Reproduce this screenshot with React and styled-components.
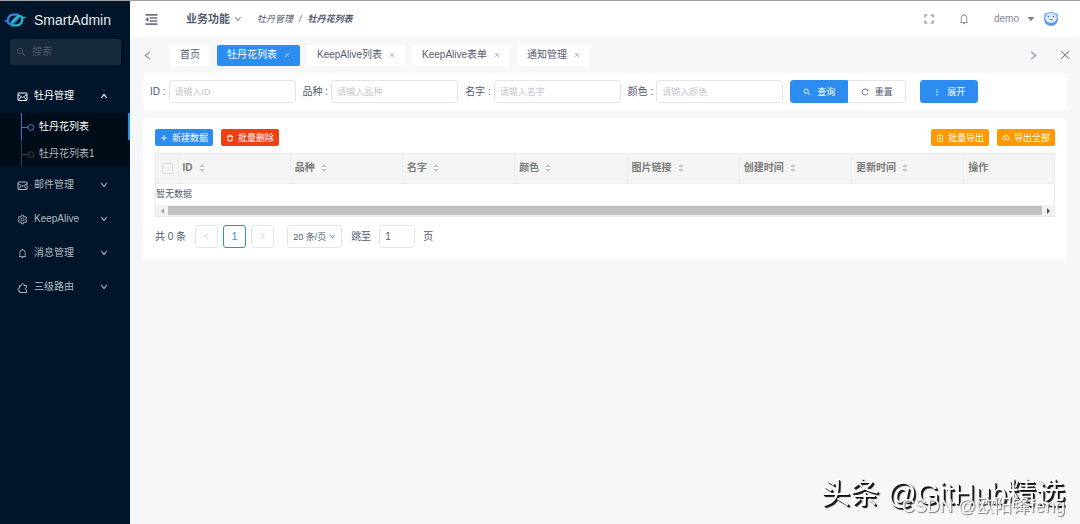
import styled, { createGlobalStyle, css } from 'styled-components';
import {
    AiOutlineMenuFold,
    AiOutlineDown,
    AiOutlineUp,
    AiOutlineLeft,
    AiOutlineRight,
    AiOutlineClose,
    AiOutlineSearch,
    AiOutlineSetting,
    AiOutlineBell,
    AiOutlineReload,
    AiOutlinePlus,
    AiOutlineDelete,
    AiOutlineCloudDownload,
    AiFillCaretDown,
} from 'react-icons/ai';

const menus = [
    {
        name: '牡丹管理',
        icon: <MailIcon />,
        open: true,
        children: [
            { name: '牡丹花列表', active: true },
            { name: '牡丹花列表1' },
        ],
    },
    { name: '邮件管理', icon: <MailIcon /> },
    { name: 'KeepAlive', icon: <AiOutlineSetting /> },
    { name: '消息管理', icon: <AiOutlineBell /> },
    { name: '三级路由', icon: <PuzzleIcon /> },
];

const tabs = [
    { name: '首页', fixed: true },
    { name: '牡丹花列表', active: true },
    { name: 'KeepAlive列表' },
    { name: 'KeepAlive表单' },
    { name: '通知管理' },
];

const fields = [
    { id: 'id', name: 'ID' },
    { id: 'breed', name: '品种' },
    { id: 'name', name: '名字' },
    { id: 'color', name: '颜色' },
];

const columns = ['ID', '品种', '名字', '颜色', '图片链接', '创建时间', '更新时间'];

function Logo() {
    return (
        <svg width="22" height="14" viewBox="0 0 22 14" fill="none" strokeWidth="2.4" strokeLinecap="round" aria-hidden="true">
            <path d="M14 1.600H9.500C3.500 1.600 1.500 11 6.500 11C9 11 11.500 7.500 14 4.800" stroke="#2f83e8" />
            <path d="M1 8H3" stroke="#2f83e8" strokeWidth="1.500" />
            <path d="M8 12.400H12.500C18.500 12.400 20.500 3 15.500 3C13 3 10.500 6.500 8 9.200" stroke="#22b5c8" />
            <path d="M19 4.500H21" stroke="#22b5c8" strokeWidth="1.500" />
        </svg>
    );
}

function Avatar() {
    return (
        <svg width="16" height="16" viewBox="0 0 16 16" aria-hidden="true">
            <circle cx="2.500" cy="4" r="2" fill="#a9cdf5" />
            <circle cx="13.500" cy="4" r="2" fill="#a9cdf5" />
            <circle cx="8" cy="8" r="7" fill="#5a9be6" />
            <ellipse cx="8" cy="7" rx="5.800" ry="5" fill="#dcecfc" />
            <circle cx="5.500" cy="5.500" r="0.800" fill="#3d6ea8" />
            <circle cx="10.500" cy="5.500" r="0.800" fill="#3d6ea8" />
            <path d="M6.500 8.500H9.500" stroke="#3d6ea8" strokeWidth="0.800" />
        </svg>
    );
}

function MailIcon() {
    return (
        <svg viewBox="0 0 11 11" fill="none" stroke="currentColor" aria-hidden="true">
            <rect x="1" y="2" width="9" height="7.500" rx="0.500" />
            <path d="M1 3.500L5.500 6.500L10 3.500M1.500 9L4 6M9.500 9L7 6" strokeWidth="0.900" />
        </svg>
    );
}

function PuzzleIcon() {
    return (
        <svg viewBox="0 0 11 11" fill="none" stroke="currentColor" aria-hidden="true">
            <path d="M2.500 3.500H4.500C4 1 7.500 1 7 3.500H9.500V5.500C8 5.500 8 8 9.500 8V10.500H2.500V8.500C0.200 9 0.200 5.800 2.500 6.200Z" />
        </svg>
    );
}

function FullscreenIcon() {
    return (
        <svg width="10" height="10" viewBox="0 0 10 10" fill="none" stroke="currentColor" strokeWidth="1.200" aria-hidden="true">
            <path d="M1 3.500V1H3.500M6.500 1H9V3.500M9 6.500V9H6.500M3.500 9H1V6.500" />
        </svg>
    );
}

function MoreIcon() {
    return (
        <svg viewBox="0 0 8 8" fill="currentColor" aria-hidden="true">
            <path d="M3.500 1H4.700V2.200H3.500ZM3.500 3.500H4.700V4.700H3.500ZM3.500 6H4.700V7.200H3.500Z" />
        </svg>
    );
}

function ExportIcon() {
    return (
        <svg viewBox="0 0 8 8" fill="none" stroke="currentColor" strokeWidth="0.800" aria-hidden="true">
            <path d="M2.500 1.500H1.500V7.500H6.500V1.500H5.500M2.800 1H5.200M4 2.500V5.800M2.800 4.600L4 5.800L5.200 4.600" />
        </svg>
    );
}

function SortIcon() {
    return (
        <svg width="6" height="8" viewBox="0 0 6 8" fill="#c5c8ce" aria-hidden="true">
            <path d="M3 0L6 3H0Z" />
            <path d="M3 8L0 5H6Z" />
        </svg>
    );
}

function Sidebar() {
    return (
        <Side>
            <Brand href="#home"><Logo />SmartAdmin</Brand>
            <MenuSearch>
                <AiOutlineSearch />
                <input type="text" placeholder="搜索" aria-label="搜索" />
            </MenuSearch>
            <nav>
                {menus.map((menu) => (
                    <div key={menu.name}>
                        <MenuItem type="button" $open={menu.open} aria-expanded={!!menu.open}>
                            {menu.icon}
                            <span>{menu.name}</span>
                            {menu.open ? <AiOutlineUp className="arrow" /> : <AiOutlineDown className="arrow" />}
                        </MenuItem>
                        {menu.children && (
                            <SubMenu>
                                {menu.children.map((child) => (
                                    <SubItem key={child.name} href="#peony" $active={child.active}>
                                        <Branch viewBox="0 0 14 27" $active={child.active} aria-hidden="true">
                                            <path d="M0.500 0V27M0.500 14.500H7" />
                                            <circle cx="10" cy="14.500" r="2.800" />
                                        </Branch>
                                        {child.name}
                                    </SubItem>
                                ))}
                            </SubMenu>
                        )}
                    </div>
                ))}
            </nav>
        </Side>
    );
}

function Header() {
    return (
        <Top>
            <IconButton type="button" aria-label="收起菜单" $size={15} $color="#515a6e" $bold><AiOutlineMenuFold /></IconButton>
            <SystemButton type="button">业务功能 <AiOutlineDown /></SystemButton>
            <Crumbs>
                <a href="#peony">牡丹管理</a>
                <span>/</span>
                <b>牡丹花列表</b>
            </Crumbs>
            <Tools>
                <IconButton type="button" aria-label="全屏"><FullscreenIcon /></IconButton>
                <IconButton type="button" aria-label="通知" $size={12}><AiOutlineBell /></IconButton>
                <UserButton type="button">demo <AiFillCaretDown /><Avatar /></UserButton>
            </Tools>
        </Top>
    );
}

function TabBar() {
    return (
        <Tabs>
            <IconButton type="button" aria-label="向左" $size={11} $bold><AiOutlineLeft /></IconButton>
            <TabList>
                {tabs.map((tab) => (
                    <Tab key={tab.name} type="button" $active={tab.active}>
                        {tab.name}
                        {!tab.fixed && <AiOutlineClose />}
                    </Tab>
                ))}
            </TabList>
            <TabActions>
                <IconButton type="button" aria-label="向右" $size={11} $bold><AiOutlineRight /></IconButton>
                <IconButton type="button" aria-label="关闭" $size={12}><AiOutlineClose /></IconButton>
            </TabActions>
        </Tabs>
    );
}

function SearchForm() {
    return (
        <Search onSubmit={(e) => e.preventDefault()}>
            {fields.map((field) => (
                <Field key={field.id}>
                    <label htmlFor={field.id}>{field.name} :</label>
                    <TextInput id={field.id} type="text" placeholder={`请输入${field.name}`} />
                </Field>
            ))}
            <ButtonGroup>
                <Button type="submit" $color="#2d8cf0"><AiOutlineSearch />查询</Button>
                <Button type="reset"><AiOutlineReload />重置</Button>
            </ButtonGroup>
            <Button type="button" $color="#2d8cf0"><MoreIcon />展开</Button>
        </Search>
    );
}

function DataTable() {
    return (
        <TableBox>
            <Table>
                <colgroup>
                    <col className="check" />
                    {columns.map((column) => <col key={column} className="data" />)}
                    <col />
                </colgroup>
                <thead>
                    <tr>
                        <th><Checkbox type="checkbox" aria-label="全选" disabled /></th>
                        {columns.map((column) => (
                            <th key={column}><HeadCell>{column}<SortIcon /></HeadCell></th>
                        ))}
                        <th>操作</th>
                    </tr>
                </thead>
                <tbody>
                    <tr><td colSpan={9}>暂无数据</td></tr>
                </tbody>
            </Table>
            <ScrollBar>
                <ScrollArrow viewBox="0 0 12 12" $color="#a3a3a3" aria-hidden="true"><path d="M8 3V9L5 6Z" /></ScrollArrow>
                <ScrollThumb />
                <ScrollArrow viewBox="0 0 12 12" $color="#505050" aria-hidden="true"><path d="M5 3V9L8 6Z" /></ScrollArrow>
            </ScrollBar>
        </TableBox>
    );
}

function Pagination() {
    return (
        <Pager>
            <PagerTotal>共 0 条</PagerTotal>
            <PageList>
                <PageButton type="button" aria-label="上一页" disabled><AiOutlineLeft /></PageButton>
                <PageButton type="button" $active>1</PageButton>
                <PageButton type="button" aria-label="下一页" disabled><AiOutlineRight /></PageButton>
            </PageList>
            <SizeSelect>
                <select aria-label="每页条数" defaultValue="20">
                    <option value="20">20 条/页</option>
                    <option value="50">50 条/页</option>
                </select>
                <AiOutlineDown />
            </SizeSelect>
            <Jump>
                <label htmlFor="page">跳至</label>
                <PageInput id="page" type="text" defaultValue="1" />
                页
            </Jump>
        </Pager>
    );
}

function App() {
    return (
        <>
            <GlobalStyle />
            <Layout>
                <Sidebar />
                <Main>
                    <Header />
                    <TabBar />
                    <Content>
                        <SearchForm />
                        <Card>
                            <Toolbar>
                                <Button type="button" $small $color="#2d8cf0"><AiOutlinePlus />新建数据</Button>
                                <Button type="button" $small $color="#ed4014"><AiOutlineDelete />批量删除</Button>
                                <ToolbarEnd>
                                    <Button type="button" $small $color="#ff9900"><ExportIcon />批量导出</Button>
                                    <Button type="button" $small $color="#ff9900"><AiOutlineCloudDownload />导出全部</Button>
                                </ToolbarEnd>
                            </Toolbar>
                            <DataTable />
                            <Pagination />
                        </Card>
                    </Content>
                </Main>
            </Layout>
            <Watermark>
                <WatermarkTitle>头条 @GitHub精选</WatermarkTitle>
                <WatermarkSource>CSDN @欧阳锋feng</WatermarkSource>
            </Watermark>
        </>
    );
}

export default App;

const GlobalStyle = createGlobalStyle`
* {
    box-sizing: border-box;
}

body {
    margin: 0;
    background-color: #f5f7f9;
    color: #515a6e;
    font-family: "Liberation Sans", "Noto Sans CJK SC", sans-serif;
    font-size: 10px;
    line-height: 16px;
}

button, input, select {
    margin: 0;
    padding: 0;
    border: none;
    background: none;
    color: inherit;
    font: inherit;
}

a {
    color: inherit;
    text-decoration: none;
}

svg {
    flex-shrink: 0;
}
`

const Layout = styled.div`
    display: flex;
    min-height: 100vh;
    border-top: 1px solid #a0a0a0;
`

/* SIDEBAR */

const Side = styled.aside`
    flex: 0 0 130px;
    min-width: 0;
    background-color: #001529;
    color: #b3b9bf;
`

const Brand = styled.a`
    display: flex;
    align-items: center;
    gap: 8px;
    height: 38px;
    padding-left: 4px;
    color: #e6e8ea;
    font-size: 14px;
`

const MenuSearch = styled.div`
    display: flex;
    align-items: center;
    gap: 6px;
    height: 26px;
    margin: 0 9px 14px 10px;
    padding: 0 6px;
    border-radius: 3px;
    background-color: #182b3b;
    color: #4b5a67;

    input {
        width: 100%;
        min-width: 0;
        outline: none;
    }

    input::placeholder {
        color: #4b5a67;
    }
`

const MenuItem = styled.button`
    display: flex;
    align-items: center;
    gap: 6px;
    width: 100%;
    height: 34px;
    padding: 0 22px 0 17px;
    color: ${({ $open }) => ($open ? '#fff' : 'inherit')};
    text-align: left;

    span {
        flex: 1;
    }

    svg {
        width: 11px;
        height: 11px;
    }

    .arrow {
        width: 8px;
        height: 8px;
        stroke-width: 60px;
        stroke: currentColor;
    }
`

const SubMenu = styled.div`
    margin-bottom: 1px;
    background-color: #000c17;
`

const SubItem = styled.a`
    display: flex;
    align-items: center;
    gap: 4px;
    height: 27px;
    padding-left: 21px;
    border-right: 2px solid ${({ $active }) => ($active ? '#2d8cf0' : 'transparent')};
    color: ${({ $active }) => ($active ? '#fff' : 'inherit')};
`

const Branch = styled.svg`
    width: 14px;
    height: 27px;
    fill: none;
    stroke: ${({ $active }) => ($active ? '#2a7bd2' : '#333e48')};
`

/* HEADER */

const Main = styled.div`
    flex: 1;
    min-width: 0;
`

const Top = styled.header`
    display: flex;
    align-items: center;
    height: 36px;
    padding: 0 21px 0 14px;
    background-color: #fff;
`

const IconButton = styled.button`
    display: flex;
    color: ${({ $color }) => $color || '#808695'};
    font-size: ${({ $size }) => $size || 10}px;

    ${({ $bold }) => $bold && css`
        svg {
            stroke: currentColor;
            stroke-width: 20px;
        }
    `}
`

const SystemButton = styled.button`
    display: flex;
    align-items: center;
    gap: 4px;
    margin: 0 15px 0 27px;
    font-size: 11px;
    font-weight: bold;

    svg {
        width: 8px;
        height: 8px;
    }
`

const Crumbs = styled.nav`
    display: flex;
    gap: 6px;
    font-size: 9px;
    font-style: italic;
`

const Tools = styled.div`
    display: flex;
    align-items: center;
    gap: 24px;
    margin-left: auto;
`

const UserButton = styled.button`
    display: flex;
    align-items: center;
    gap: 7px;
    color: #808695;
`

const Tabs = styled.div`
    display: flex;
    align-items: center;
    height: 36px;
    padding: 0 9px 0 12px;
`

const TabList = styled.div`
    display: flex;
    gap: 7px;
    margin-left: 17px;
`

const Tab = styled.button`
    display: flex;
    align-items: center;
    gap: 7px;
    height: 21px;
    padding: 0 10px;
    border-radius: 2px;
    background-color: ${({ $active }) => ($active ? '#2d8cf0' : '#fff')};
    color: ${({ $active }) => ($active ? '#fff' : '#515a6e')};
    white-space: nowrap;

    svg {
        width: 6px;
        height: 6px;
        opacity: 0.6;
        stroke: currentColor;
        stroke-width: 40px;
    }
`

const TabActions = styled.div`
    display: flex;
    align-items: center;
    gap: 20px;
    margin-left: auto;
`

/* CONTENT */

const Content = styled.main`
    display: flex;
    flex-direction: column;
    gap: 8px;
    padding: 0 13px;
`

const Search = styled.form`
    display: flex;
    flex-wrap: wrap;
    align-items: center;
    gap: 7px;
    padding: 7px;
    border-radius: 3px;
    background-color: #fff;
`

const Field = styled.div`
    display: flex;
    align-items: center;
    gap: 3px;
`

const control = css`
    height: 23px;
    border: 1px solid #e3e5e8;
    border-radius: 3px;
    background-color: #fff;
`

const TextInput = styled.input`
    ${control}
    width: 127px;
    padding: 0 5px;
    font-size: 9px;

    &::placeholder {
        color: #c5c8ce;
    }
`

const Button = styled.button`
    display: flex;
    align-items: center;
    justify-content: center;
    gap: ${({ $small }) => ($small ? 4 : 6)}px;
    width: 58px;
    height: ${({ $small }) => ($small ? 17 : 23)}px;
    border: 1px solid ${({ $color }) => $color || '#e3e5e8'};
    border-radius: ${({ $small }) => ($small ? 2 : 3)}px;
    background-color: ${({ $color }) => $color || '#fff'};
    color: ${({ $color }) => ($color ? '#fff' : '#515a6e')};
    font-size: 9px;
    white-space: nowrap;

    svg {
        width: 8px;
        height: 8px;
    }

    svg[viewBox="64 64 896 896"],
    svg[viewBox="0 0 1024 1024"] {
        stroke: currentColor;
        stroke-width: 30px;
    }
`

const ButtonGroup = styled.div`
    display: flex;
    margin-right: 7px;

    button:first-child {
        border-radius: 3px 0 0 3px;
    }

    button:last-child {
        border-left: none;
        border-radius: 0 3px 3px 0;
    }
`

const Card = styled.section`
    padding: 11px 12px;
    border-radius: 3px;
    background-color: #fff;
`

const Toolbar = styled.div`
    display: flex;
    gap: 8px;
    margin-bottom: 7px;
`

const ToolbarEnd = styled.div`
    display: flex;
    gap: 8px;
    margin-left: auto;
`

const TableBox = styled.div`
    border: 1px solid #e8eaec;
`

const Table = styled.table`
    width: 100%;
    border-collapse: collapse;
    table-layout: fixed;

    col.check {
        width: 22px;
    }

    col.data {
        width: 12.5%;
    }

    th {
        height: 29px;
        padding: 0 4px;
        border-right: 1px solid #ebedee;
        border-bottom: 1px solid #ebedee;
        background-color: #f4f4f4;
        color: #7b7b7b;
        text-align: left;
        white-space: nowrap;
    }

    th:last-child {
        border-right: none;
    }

    td {
        height: 22px;
        padding: 0;
        font-size: 9px;
    }
`

const HeadCell = styled.div`
    display: flex;
    align-items: center;
    gap: 6px;
`

const Checkbox = styled.input`
    display: block;
    appearance: none;
    width: 11px;
    height: 11px;
    margin-left: 2px;
    border: 1px solid #dcdee2;
    border-radius: 1px;
    background-color: #f3f3f3;
`

const ScrollBar = styled.div`
    display: flex;
    align-items: center;
    height: 11px;
    background-color: #f1f1f1;
`

const ScrollArrow = styled.svg`
    width: 12px;
    height: 12px;
    fill: ${({ $color }) => $color};
`

const ScrollThumb = styled.div`
    flex: 1;
    height: 9px;
    background-color: #c1c1c1;
`

/* PAGINATION */

const Pager = styled.div`
    display: flex;
    flex-wrap: wrap;
    align-items: center;
    margin-top: 8px;
`

const PagerTotal = styled.span`
    margin-right: 9px;
`

const PageList = styled.div`
    display: flex;
    gap: 5px;
    margin-right: 13px;
`

const PageButton = styled.button`
    ${control}
    display: flex;
    align-items: center;
    justify-content: center;
    width: 23px;

    svg {
        width: 9px;
        height: 9px;
    }

    ${({ $active }) => $active && css`
        border-color: #2d8cf0;
        color: #2d8cf0;
    `}

    &:disabled {
        color: #c5c8ce;
    }
`

const SizeSelect = styled.div`
    ${control}
    display: flex;
    align-items: center;
    gap: 2px;
    margin-right: 9px;
    padding: 0 5px;
    font-size: 9px;

    select {
        appearance: none;
        outline: none;
    }

    svg {
        width: 7px;
        height: 7px;
    }
`

const Jump = styled.div`
    display: flex;
    align-items: center;
    gap: 8px;
`

const PageInput = styled.input`
    ${control}
    width: 36px;
    padding: 0 5px;
`

/* WATERMARK */

const Watermark = styled.div`
    position: fixed;
    right: 15px;
    bottom: 8px;
    display: grid;
    justify-items: end;
    pointer-events: none;
    white-space: nowrap;
`

const WatermarkTitle = styled.span`
    grid-area: 1 / 1;
    padding-bottom: 6px;
    color: #fff;
    font-size: 29px;
    line-height: 32px;
    text-shadow: 1px 1px 0 #111, 2px 2px 1px #111;
`

const WatermarkSource = styled.span`
    grid-area: 1 / 1;
    align-self: end;
    color: #f5f7f9;
    font-size: 18px;
    line-height: 20px;
    text-shadow: 1px 1px 1px #777;
`
